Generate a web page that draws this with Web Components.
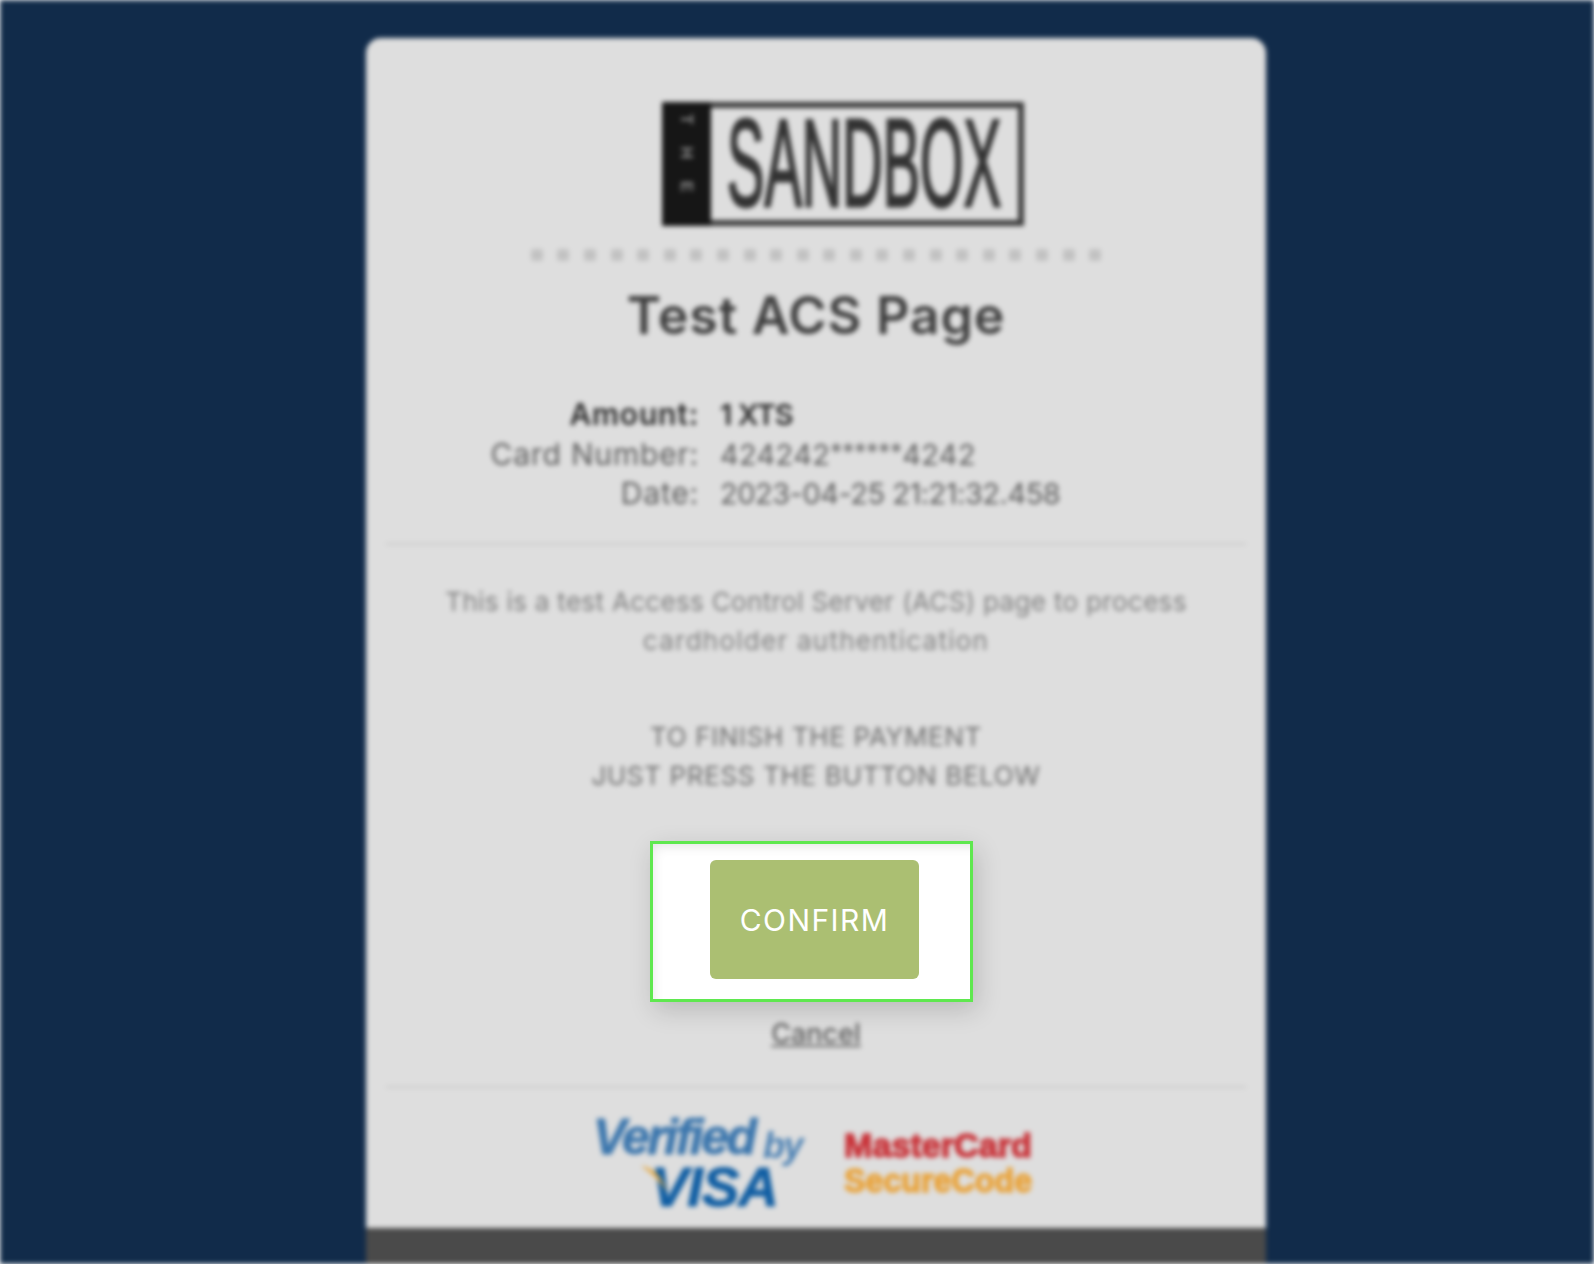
<!DOCTYPE html>
<html lang="en">
<head>
<meta charset="utf-8">
<title>Test ACS Page</title>
<style>
  html, body { margin: 0; height: 100%; background: #fff; overflow: hidden; }
</style>
</head>
<body>
<acs-page>
  <acs-card>
    <acs-logo></acs-logo>
    <acs-dots></acs-dots>
    <acs-title>Test ACS Page</acs-title>
    <acs-details>
      <acs-row label="Amount:" value="1 XTS" tracking="-.9" strong></acs-row>
      <acs-row label="Card Number:" value="424242******4242" tracking=".3"></acs-row>
      <acs-row label="Date:" value="2023-04-25 21:21:32.458" tracking="-.5"></acs-row>
    </acs-details>
    <acs-note>
      <p>This is a test Access Control Server (ACS) page to process<br><span style="letter-spacing: 1.25px">cardholder authentication</span></p>
      <p class="caps">TO FINISH THE PAYMENT<br>JUST PRESS THE BUTTON BELOW</p>
    </acs-note>
    <acs-cancel>Cancel</acs-cancel>
    <acs-brands></acs-brands>
    <acs-footer></acs-footer>
  </acs-card>
</acs-page>
<acs-spotlight>CONFIRM</acs-spotlight>

<script>
// each element just writes its markup into an open shadow root
class Base extends HTMLElement {
  constructor() {
    super();
    this.attachShadow({ mode: 'open' });
  }
  connectedCallback() {
    this.shadowRoot.innerHTML = this.markup();
  }
  markup() { return ''; }
}

class AcsPage extends Base {
  markup() {
    return `
      <style>
        :host {
          display: flex;
          box-sizing: border-box;
          height: 1264px;
          padding: 38px 0 0 366px;
          overflow: hidden;
          background: #112b4a;
          filter: blur(2.6px);
        }
      </style>
      <slot></slot>`;
  }
}

class AcsCard extends Base {
  markup() {
    return `
      <style>
        :host {
          display: block;
          flex: none;
          box-sizing: border-box;
          width: 900px;
          height: 1260px;
          padding: 64px 20px 0;
          border-radius: 15px 15px 0 0;
          background: #dedede;
          overflow: hidden;
        }
      </style>
      <slot></slot>`;
  }
}

class AcsLogo extends Base {
  markup() {
    return `
      <style>
        :host { display: block; margin-left: 276px; width: 362px; height: 124px; }
        svg { display: block; overflow: visible; }
        text { font-family: "Liberation Sans", Arial, sans-serif; }
      </style>
      <svg width="362" height="124" viewBox="0 0 362 124">
        <rect x="3" y="3" width="356" height="118" fill="none" stroke="#3c3c3c" stroke-width="6"/>
        <rect x="0" y="0" width="49" height="124" fill="#161616"/>
        <text transform="translate(19 62) rotate(90)" text-anchor="middle" font-size="17" font-weight="700" letter-spacing="22" fill="#8c8c8c">THE</text>
        <text transform="translate(65 104) scale(.452 1)" font-size="124" stroke="#333" stroke-width="3" fill="#333">SANDBOX</text>
      </svg>`;
  }
}

class AcsDots extends Base {
  markup() {
    const dots = Array.from({ length: 22 }, () => '<i></i>').join('');
    return `
      <style>
        :host { display: flex; justify-content: center; gap: 14.6px; height: 14px; margin-top: 22px; align-items: center; }
        i { display: block; width: 12px; height: 12px; background: #c2c2c2; border-radius: 3px; }
      </style>
      ${dots}`;
  }
}

class AcsTitle extends Base {
  markup() {
    return `
      <style>
        :host {
          display: block;
          margin-top: 24px;
          text-align: center;
          font: 600 52px/60px Inter, "Noto Sans", sans-serif;
          letter-spacing: .8px;
          color: #3e3e3e;
        }
      </style>
      <slot></slot>`;
  }
}

class AcsDetails extends Base {
  markup() {
    return `
      <style>
        :host {
          display: block;
          margin-top: 49px;
          padding-bottom: 29px;
          border-bottom: 2px solid #cacaca;
        }
      </style>
      <slot></slot>`;
  }
}

class AcsRow extends Base {
  markup() {
    const strong = this.hasAttribute('strong');
    // the mask is set smaller than the digits and sits high
    const value = this.getAttribute('value').replace(/\*+/, '<small>$&</small>');
    return `
      <style>
        :host {
          display: grid;
          grid-template-columns: 313px 1fr;
          column-gap: 21px;
          font: ${strong ? 600 : 400} 29px/39.5px Inter, "Noto Sans", sans-serif;
          color: ${strong ? '#2c2c2c' : '#5c5c5c'};
        }
        .label { text-align: right; font-size: 30px; letter-spacing: .8px; }
        .value { letter-spacing: ${this.getAttribute('tracking')}px; }
        small { font-size: 24px; line-height: 0; letter-spacing: 0; vertical-align: 4px; }
      </style>
      <span class="label">${this.getAttribute('label')}</span>
      <span class="value">${value}</span>`;
  }
}

class AcsNote extends Base {
  markup() {
    return `
      <style>
        :host { display: block; margin-top: 37px; text-align: center; color: #808080; }
        ::slotted(p) {
          margin: 0 0 56px;
          font: 400 26px/39.5px Inter, "Noto Sans", sans-serif;
          letter-spacing: .33px;
        }
        ::slotted(p.caps) { margin-bottom: 223px; letter-spacing: .65px; color: #6e6e6e; }
      </style>
      <slot></slot>`;
  }
}

class AcsCancel extends Base {
  markup() {
    return `
      <style>
        :host {
          display: block;
          text-align: center;
          font: 500 27px/30px Inter, "Noto Sans", sans-serif;
          color: #5c5c5c;
          text-decoration: underline;
          padding-bottom: 37px;
          border-bottom: 2px solid #cacaca;
        }
      </style>
      <slot></slot>`;
  }
}

class AcsBrands extends Base {
  markup() {
    return `
      <style>
        :host { display: flex; margin: 28px 0 0 207px; gap: 41px; height: 96px; }
        svg { display: block; overflow: visible; }
        text { font-family: "Liberation Sans", Arial, sans-serif; font-weight: 700; }
      </style>
      <svg width="210" height="96" viewBox="0 0 210 96">
        <text x="0" y="38" font-size="50" font-style="italic" letter-spacing="-2.5" fill="#3b76ad" stroke="#3b76ad" stroke-width=".8">Verified</text>
        <text x="170" y="42" font-size="36" font-style="italic" letter-spacing="-1.5" fill="#4a80b3">by</text>
        <text x="58" y="90" font-size="56" font-style="italic" letter-spacing="-1" fill="#105ea3" stroke="#105ea3" stroke-width="1">VISA</text>
        <path d="M48 50 Q66 52 74 76 Q64 60 48 50Z" fill="#e5a63a"/>
      </svg>
      <svg width="190" height="96" viewBox="0 0 190 96">
        <text transform="translate(0 41) scale(1.035 1)" font-size="33" fill="#c9343a" stroke="#c9343a" stroke-width="1.4">MasterCard</text>
        <text transform="translate(0 76) scale(.977 1)" font-size="33" fill="#e9a33a" stroke="#e9a33a" stroke-width="1.4">SecureCode</text>
      </svg>`;
  }
}

class AcsFooter extends Base {
  markup() {
    return `<style>:host { display: block; height: 60px; margin: 16px -20px 0; background: #4a4a4a; }</style>`;
  }
}

// sharp highlighted button above the blurred page
class AcsSpotlight extends Base {
  markup() {
    return `
      <style>
        :host {
          position: absolute;
          left: 650px;
          top: 841px;
          box-sizing: border-box;
          width: 323px;
          height: 161px;
          padding: 16px 51px 20px 57px;
          background: #fff;
          border: 3px solid #5fe84f;
          box-shadow: 4px 8px 24px rgba(0, 0, 0, .16), inset 8px 10px 14px -10px rgba(0, 0, 0, .14);
        }
        button {
          display: block;
          width: 100%;
          height: 100%;
          padding: 0;
          border: 0;
          border-radius: 6px;
          background: #abbf72;
          color: #fff;
          font: 400 30px Inter, "Noto Sans", sans-serif;
          letter-spacing: 1.4px;
        }
      </style>
      <button><slot></slot></button>`;
  }
}

customElements.define('acs-page', AcsPage);
customElements.define('acs-card', AcsCard);
customElements.define('acs-logo', AcsLogo);
customElements.define('acs-dots', AcsDots);
customElements.define('acs-title', AcsTitle);
customElements.define('acs-details', AcsDetails);
customElements.define('acs-row', AcsRow);
customElements.define('acs-note', AcsNote);
customElements.define('acs-cancel', AcsCancel);
customElements.define('acs-brands', AcsBrands);
customElements.define('acs-footer', AcsFooter);
customElements.define('acs-spotlight', AcsSpotlight);
</script>
</body>
</html>
